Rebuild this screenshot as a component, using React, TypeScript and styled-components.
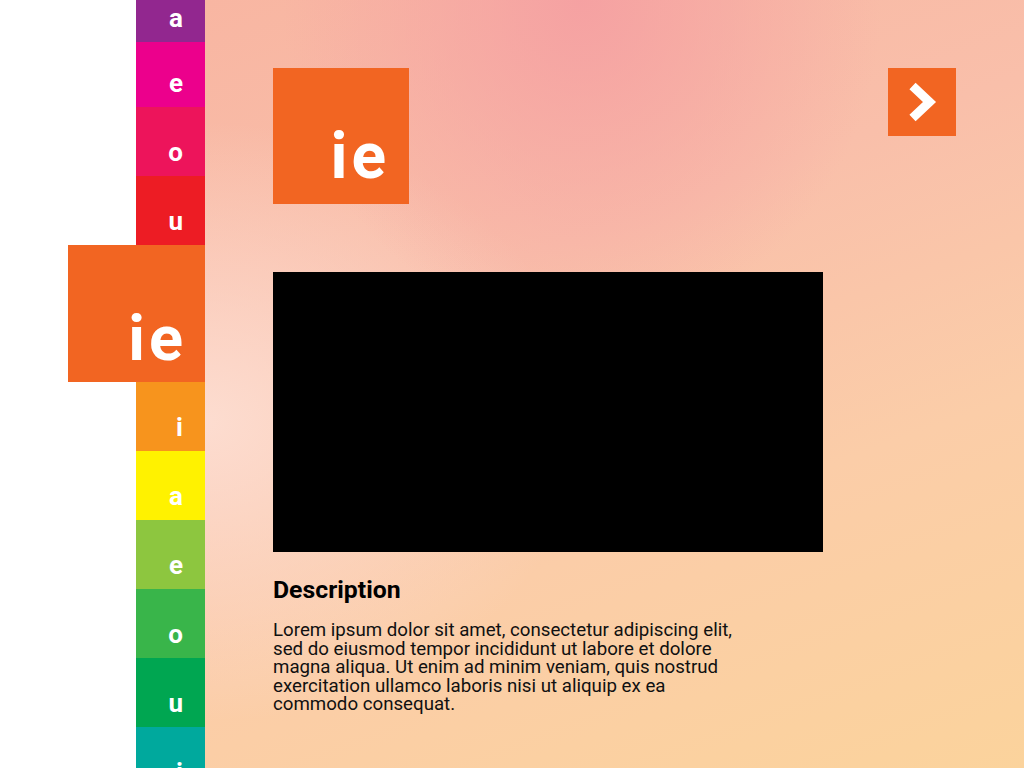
import React from "react";
import styled, { createGlobalStyle } from "styled-components";

const GlobalStyle = createGlobalStyle`
  html, body {
    margin: 0;
    padding: 0;
    height: 100%;
    overflow: hidden;
  }
  body {
    font-family: Roboto, "Liberation Sans", sans-serif;
    background: #ffffff;
  }
`;

const colors = {
  orange: "#f26522",
  white: "#ffffff",
  text: "#111111",
};

interface ITile {
  letter: string;
  color: string;
  height?: number;
}

const tiles: ITile[] = [
  { letter: "a", color: "#92278f" },
  { letter: "e", color: "#ec008c", height: 65 },
  { letter: "o", color: "#ed145b" },
  { letter: "u", color: "#ed1c24" },
];

const tilesBelow: ITile[] = [
  { letter: "i", color: "#f7941d" },
  { letter: "a", color: "#fff200" },
  { letter: "e", color: "#8dc63f" },
  { letter: "o", color: "#39b54a" },
  { letter: "u", color: "#00a651" },
  { letter: "i", color: "#00a99d" },
];

export default function App() {
  return (
    <>
      <GlobalStyle />
      <Page>
        <Sidebar>
          <TileList>
            {tiles.map((tile, index) => (
              <Tile key={index} bgColor={tile.color} h={tile.height ?? 69}>
                {tile.letter}
              </Tile>
            ))}
            <BigTile>ie</BigTile>
            {tilesBelow.map((tile, index) => (
              <Tile key={index} bgColor={tile.color} h={tile.height ?? 69}>
                {tile.letter}
              </Tile>
            ))}
          </TileList>
        </Sidebar>
        <Main>
          <Header>
            <Logo>ie</Logo>
            <NextButton aria-label="next">
              <svg width="68" height="68" viewBox="0 0 68 68">
                <polyline
                  points="24.5,18 41.5,34 24.5,50"
                  fill="none"
                  stroke="#ffffff"
                  strokeWidth="9"
                  strokeLinejoin="miter"
                />
              </svg>
            </NextButton>
          </Header>
          <Video />
          <Title>Description</Title>
          <Body>
            Lorem ipsum dolor sit amet, consectetur adipiscing elit, sed do
            eiusmod tempor incididunt ut labore et dolore magna aliqua. Ut enim
            ad minim veniam, quis nostrud exercitation ullamco laboris nisi ut
            aliquip ex ea commodo consequat.
          </Body>
        </Main>
      </Page>
    </>
  );
}

const Page = styled.div`
  display: flex;
  width: 100vw;
  height: 100vh;
  overflow: hidden;
`;

const Sidebar = styled.div`
  width: 205px;
  flex-shrink: 0;
  background: ${colors.white};
  overflow: hidden;
`;

const TileList = styled.div`
  display: flex;
  flex-direction: column;
  align-items: flex-end;
  margin-top: -27px;
`;

const Tile = styled.div<{ bgColor: string; h: number }>`
  width: 69px;
  height: ${(props) => props.h}px;
  flex-shrink: 0;
  box-sizing: border-box;
  background-color: ${(props) => props.bgColor};
  color: ${colors.white};
  display: flex;
  align-items: flex-end;
  justify-content: flex-end;
  padding: 0 22px 11px 0;
  font-size: 26px;
  font-weight: 700;
  line-height: 1;
`;

const BigTile = styled.div`
  width: 137px;
  height: 137px;
  flex-shrink: 0;
  box-sizing: border-box;
  background-color: ${colors.orange};
  color: ${colors.white};
  display: flex;
  align-items: flex-end;
  justify-content: flex-end;
  padding: 0 18px 12px 0;
  font-size: 63px;
  font-weight: 700;
  letter-spacing: 4px;
  line-height: 1;
`;

const Main = styled.div`
  flex: 1;
  box-sizing: border-box;
  padding: 68px;
  background:
    radial-gradient(ellipse 300px 330px at 46% 0%, rgba(245, 160, 162, 0.95), rgba(245, 160, 162, 0) 100%),
    radial-gradient(ellipse 380px 300px at 0% 55%, rgba(253, 222, 210, 0.95), rgba(253, 222, 210, 0) 100%),
    linear-gradient(160deg, #f8b6a2 0%, #f9bfaa 35%, #fbcda8 65%, #fbd39c 100%);
`;

const Header = styled.div`
  display: flex;
  justify-content: space-between;
  align-items: flex-start;
`;

const Logo = styled.div`
  width: 136px;
  height: 136px;
  box-sizing: border-box;
  background-color: ${colors.orange};
  color: ${colors.white};
  display: flex;
  align-items: flex-end;
  justify-content: flex-end;
  padding: 0 19px 15px 0;
  font-size: 64px;
  font-weight: 700;
  letter-spacing: 4px;
  line-height: 1;
`;

const NextButton = styled.div`
  width: 68px;
  height: 68px;
  background-color: ${colors.orange};
  svg {
    display: block;
  }
`;

const Video = styled.div`
  width: 550px;
  height: 280px;
  margin-top: 68px;
  background: #000000;
`;

const Title = styled.h2`
  margin: 24px 0 0;
  font-size: 24.8px;
  font-weight: 700;
  line-height: 28px;
  color: #000000;
`;

const Body = styled.p`
  margin: 17px 0 0;
  width: 470px;
  font-size: 18.7px;
  line-height: 18.5px;
  color: ${colors.text};
`;
